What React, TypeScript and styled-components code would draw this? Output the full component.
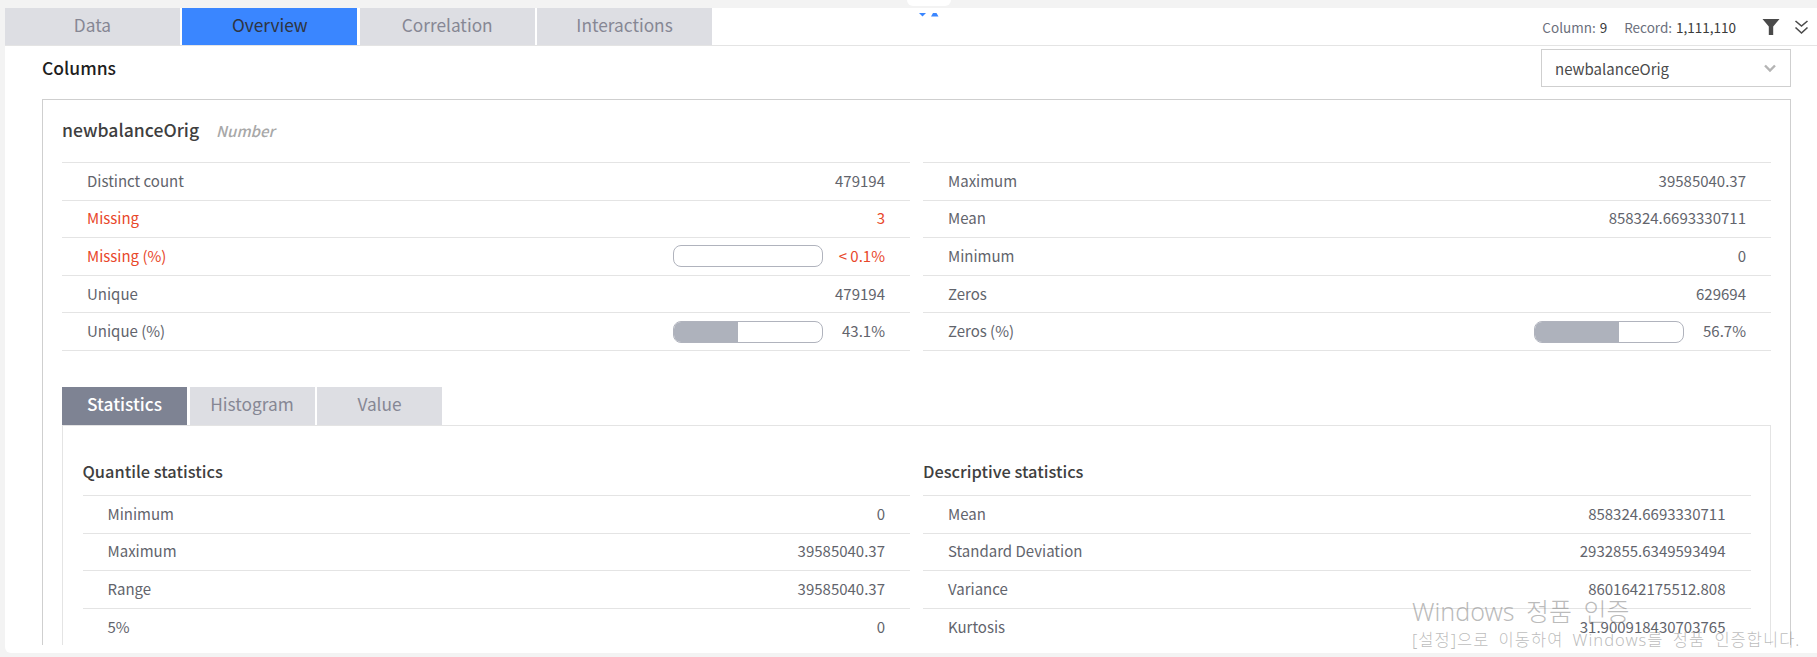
import React from "react";
import styled, { createGlobalStyle } from "styled-components";

const Global = createGlobalStyle`
  html, body { margin: 0; padding: 0; background: #f3f3f3; }
  * { box-sizing: border-box; }
  body { font-family: "Noto Sans CJK KR", "Noto Sans", sans-serif; }
`;

const Shell = styled.div`
  position: relative;
  width: 1817px;
  height: 657px;
  padding: 8px 0 4px 5px;
  overflow: hidden;
  background: #f3f3f3;
`;
const Panel = styled.div`
  height: 645px;
  background: #fff;
  border-bottom-left-radius: 6px;
  display: flex;
  flex-direction: column;
  overflow: hidden;
`;
const Notch = styled.div`
  position: absolute;
  left: 907px;
  top: 0;
  width: 44px;
  height: 6px;
  background: #fff;
  border-radius: 0 0 7px 7px;
`;
const TopBar = styled.div`
  height: 38px;
  flex: none;
  display: flex;
  align-items: stretch;
  justify-content: space-between;
  border-bottom: 1px solid #e4e4e4;
`;
const MainTabs = styled.div`
  display: flex;
  gap: 2.6px;
`;
const MainTab = styled.div<{ $active?: boolean }>`
  width: 174.8px;
  height: 37px;
  display: flex;
  align-items: center;
  justify-content: center;
  padding-bottom: 4px;
  font-size: 17.3px;
  background: ${(p) => (p.$active ? "#3a86ff" : "#dddee3")};
  color: ${(p) => (p.$active ? "#2f3440" : "#868794")};
`;
const Info = styled.div`
  display: flex;
  align-items: center;
  font-size: 13.5px;
  color: #6b6f7c;
  padding-right: 8px;
`;
const InfoValue = styled.span`
  color: #3a3a3a;
  margin-left: 4px;
`;
const InfoGap = styled.span`
  width: 17px;
`;
const FilterBtn = styled.svg`
  margin-left: 26px;
  width: 18px;
  height: 18px;
`;
const ExpandBtn = styled.svg`
  margin-left: 14px;
  width: 15px;
  height: 16px;
`;
const Content = styled.div`
  height: 599px;
  flex: none;
  padding: 3px 26px 0 37px;
  overflow: hidden;
`;
const ColumnsHead = styled.div`
  display: flex;
  align-items: center;
  justify-content: space-between;
  height: 38px;
  margin-bottom: 12px;
`;
const ColumnsTitle = styled.div`
  font-size: 17.5px;
  font-weight: 500;
  color: #1e1e1e;
  margin-top: -2px;
`;
const Select = styled.div`
  width: 250px;
  height: 38px;
  border: 1px solid #cfcfcf;
  display: flex;
  align-items: center;
  justify-content: space-between;
  padding: 0 13px;
  font-size: 15px;
  color: #4a4a4a;
`;
const Card = styled.div`
  border: 1px solid #cfcfcf;
  border-bottom: none;
  padding: 0 19px;
  height: 700px;
`;
const CardTitle = styled.div`
  display: flex;
  align-items: baseline;
  height: 62px;
  padding-top: 17px;
`;
const ColName = styled.span`
  font-size: 17.6px;
  font-weight: 500;
  color: #3f3f3f;
`;
const ColType = styled.span`
  font-size: 15px;
  font-weight: 500;
  font-style: italic;
  color: #a8a8a8;
  margin-left: 17px;
`;
const TwoCol = styled.div<{ $gap: number }>`
  display: grid;
  grid-template-columns: 1fr 1fr;
  column-gap: ${(p) => p.$gap}px;
`;
const List = styled.div`
  border-top: 1px solid #e4e4e4;
`;
const Row = styled.div<{ $warn?: boolean }>`
  height: 37.6px;
  display: flex;
  align-items: center;
  padding: 0 25px 2px;
  border-bottom: 1px solid #e4e4e4;
  font-size: 15px;
  color: ${(p) => (p.$warn ? "#e8472a" : "#62646c")};
`;
const RowLabel = styled.span`
  flex: 1;
`;
const Bar = styled.div`
  width: 150px;
  height: 22px;
  border: 1px solid #b0b3bd;
  border-radius: 8px;
  overflow: hidden;
  margin-right: 15px;
  margin-top: 2px;
  background: #fff;
`;
const BarFill = styled.div`
  height: 100%;
  background: #aeb2bc;
`;
const BarValue = styled.span`
  width: 47px;
  text-align: right;
  white-space: nowrap;
`;
const SubTabs = styled.div`
  display: flex;
  margin-top: 36px;
`;
const SubTab = styled.div<{ $active?: boolean }>`
  width: 125px;
  height: 38px;
  margin-right: 2.5px;
  display: flex;
  align-items: center;
  justify-content: center;
  padding-bottom: 4px;
  font-size: 17.3px;
  font-weight: ${(p) => (p.$active ? 500 : 400)};
  background: ${(p) => (p.$active ? "#7e8393" : "#dddee3")};
  color: ${(p) => (p.$active ? "#fff" : "#868794")};
`;
const Pane = styled.div`
  border: 1px solid #e4e4e4;
  padding: 23px 19.5px 0;
`;
const PaneHeading = styled.div`
  font-size: 16.4px;
  font-weight: 500;
  color: #3f3f3f;
  height: 46px;
  display: flex;
  align-items: center;
  padding-bottom: 2px;
`;
const Watermark = styled.div`
  position: absolute;
  left: 1412px;
  top: 595px;
  color: rgba(120, 120, 120, 0.5);
  font-family: "Noto Sans", "Noto Sans CJK KR", sans-serif;
  font-weight: 300;
  white-space: nowrap;
  pointer-events: none;
`;
const WatermarkTitle = styled.div`
  font-size: 25px;
  line-height: 32px;
  word-spacing: 5px;
`;
const WatermarkSub = styled.div`
  font-size: 16.5px;
  line-height: 25px;
  letter-spacing: 1px;
  word-spacing: 4px;
`;

type RowData = { label: string; value: string; warn?: boolean; bar?: number };

const topLeft: RowData[] = [
  { label: "Distinct count", value: "479194" },
  { label: "Missing", value: "3", warn: true },
  { label: "Missing (%)", value: "< 0.1%", warn: true, bar: 0 },
  { label: "Unique", value: "479194" },
  { label: "Unique (%)", value: "43.1%", bar: 43.1 },
];
const topRight: RowData[] = [
  { label: "Maximum", value: "39585040.37" },
  { label: "Mean", value: "858324.6693330711" },
  { label: "Minimum", value: "0" },
  { label: "Zeros", value: "629694" },
  { label: "Zeros (%)", value: "56.7%", bar: 56.7 },
];
const quantile: RowData[] = [
  { label: "Minimum", value: "0" },
  { label: "Maximum", value: "39585040.37" },
  { label: "Range", value: "39585040.37" },
  { label: "5%", value: "0" },
];
const descriptive: RowData[] = [
  { label: "Mean", value: "858324.6693330711" },
  { label: "Standard Deviation", value: "2932855.6349593494" },
  { label: "Variance", value: "8601642175512.808" },
  { label: "Kurtosis", value: "31.900918430703765" },
];

const Rows = ({ rows }: { rows: RowData[] }) => (
  <List>
    {rows.map((r) => (
      <Row key={r.label} $warn={r.warn}>
        <RowLabel>{r.label}</RowLabel>
        {r.bar !== undefined ? (
          <>
            <Bar>
              <BarFill style={{ width: `${r.bar}%` }} />
            </Bar>
            <BarValue>{r.value}</BarValue>
          </>
        ) : (
          <span>{r.value}</span>
        )}
      </Row>
    ))}
  </List>
);

export default function App() {
  return (
    <>
      <Global />
      <Shell>
        <Notch>
          <svg width="44" height="6" viewBox="0 0 44 6">
            <path d="M12 0h7l-3.500 3.500z" fill="#3a86ff" />
            <path d="M24 3.500l2-3.500h3.500l2 3.500z" fill="#3a86ff" />
          </svg>
        </Notch>
        <Panel>
          <TopBar>
            <MainTabs>
              <MainTab>Data</MainTab>
              <MainTab $active>Overview</MainTab>
              <MainTab>Correlation</MainTab>
              <MainTab>Interactions</MainTab>
            </MainTabs>
            <Info>
              <span>Column:</span>
              <InfoValue>9</InfoValue>
              <InfoGap />
              <span>Record:</span>
              <InfoValue>1,111,110</InfoValue>
              <FilterBtn viewBox="0 0 18 18">
                <path d="M0.500 1h17l-6.300 7.500v8.500h-4.400v-8.500z" fill="#4a4a4a" />
              </FilterBtn>
              <ExpandBtn viewBox="0 0 15 16" fill="none" stroke="#4a4a4a" strokeWidth="1.600">
                <path d="M1.500 2l6 5 6-5" />
                <path d="M1.500 8.500l6 5.500 6-5.500" />
              </ExpandBtn>
            </Info>
          </TopBar>
          <Content>
            <ColumnsHead>
              <ColumnsTitle>Columns</ColumnsTitle>
              <Select>
                <span>newbalanceOrig</span>
                <svg width="14" height="9" viewBox="0 0 14 9" fill="none" stroke="#b4b4b4" strokeWidth="2.400">
                  <path d="M2 1.500l5 5 5-5" />
                </svg>
              </Select>
            </ColumnsHead>
            <Card>
              <CardTitle>
                <ColName>newbalanceOrig</ColName>
                <ColType>Number</ColType>
              </CardTitle>
              <TwoCol $gap={13}>
                <Rows rows={topLeft} />
                <Rows rows={topRight} />
              </TwoCol>
              <SubTabs>
                <SubTab $active>Statistics</SubTab>
                <SubTab>Histogram</SubTab>
                <SubTab>Value</SubTab>
              </SubTabs>
              <Pane>
                <TwoCol $gap={13}>
                  <div>
                    <PaneHeading>Quantile statistics</PaneHeading>
                    <Rows rows={quantile} />
                  </div>
                  <div>
                    <PaneHeading>Descriptive statistics</PaneHeading>
                    <Rows rows={descriptive} />
                  </div>
                </TwoCol>
              </Pane>
            </Card>
          </Content>
        </Panel>
        <Watermark>
          <WatermarkTitle>Windows 정품 인증</WatermarkTitle>
          <WatermarkSub>[설정]으로 이동하여 Windows를 정품 인증합니다.</WatermarkSub>
        </Watermark>
      </Shell>
    </>
  );
}
